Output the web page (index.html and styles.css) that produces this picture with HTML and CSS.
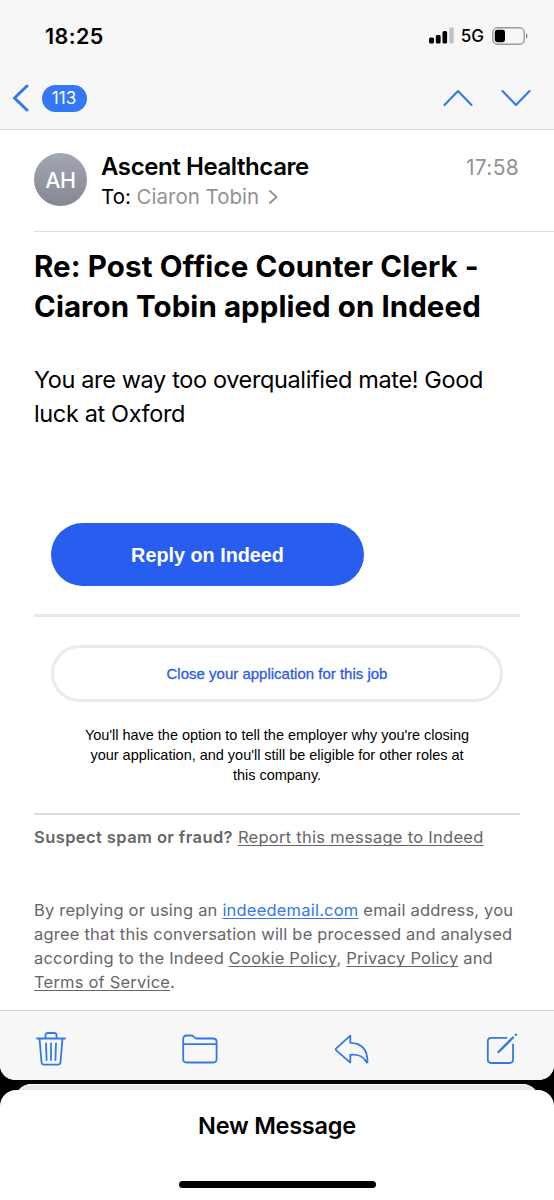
FILE: index.html
```html
<!DOCTYPE html>
<html lang="en">
<head>
<meta charset="utf-8">
<title>Mail</title>
<link rel="stylesheet" href="styles.css">
</head>
<body>
<div class="phone">
  <main class="screen">
    <header class="top">
      <div class="status">
        <span class="clock">18:25</span>
        <div class="status-right">
          <svg class="signal" width="25" height="17" viewBox="0 0 25 17">
            <rect x="0" y="10.5" width="5" height="6" rx="1.5"/>
            <rect x="6.8" y="8" width="4.8" height="8.5" rx="1.5"/>
            <rect x="13.5" y="4" width="4.6" height="12.5" rx="1.5"/>
            <rect x="20.2" y="0.3" width="4.6" height="16.2" rx="1.5" fill="#c4c4c4"/>
          </svg>
          <span class="net">5G</span>
          <svg class="battery" width="36" height="18" viewBox="0 0 36 18">
            <rect x="0.8" y="0.8" width="31.4" height="16.4" rx="4.6" fill="none" stroke="#999" stroke-width="1.4"/>
            <rect x="2.8" y="2.8" width="10.2" height="12.4" rx="2.4"/>
            <path d="M34 6.3c2 .8 2 4.6 0 5.4z" fill="#888"/>
          </svg>
        </div>
      </div>
      <nav class="nav">
        <svg class="line-icon" width="17" height="28" viewBox="0 0 17 28"><path d="M15 2 2.500 14 15 26" stroke-width="3"/></svg>
        <span class="badge">113</span>
        <svg class="line-icon up" width="30" height="18" viewBox="0 0 30 18"><path d="M1.500 16 15 2l13.500 14" stroke-width="2.1"/></svg>
        <svg class="line-icon down" width="30" height="18" viewBox="0 0 30 18"><path d="M1.500 2 15 16 28.500 2" stroke-width="2.1"/></svg>
      </nav>
    </header>

    <section class="sender">
      <div class="avatar">AH</div>
      <div class="who">
        <div class="from">Ascent Healthcare</div>
        <div class="to">To: <span class="recipient">Ciaron Tobin</span><svg class="chev" width="10" height="16" viewBox="0 0 10 16"><path d="M1.500 1.500 8.500 8l-7 6.500" fill="none" stroke="#929292" stroke-width="1.8"/></svg></div>
      </div>
      <time class="time">17:58</time>
    </section>

    <article class="mail">
      <h1 class="subject">Re: Post Office Counter Clerk -<br><span class="tighter">Ciaron Tobin applied on Indeed</span></h1>
      <p class="body">You are way too overqualified mate! Good<br>luck at Oxford</p>
      <a class="reply">Reply on Indeed</a>
      <div class="rule"></div>
      <a class="close">Close your application for this job</a>
      <p class="note">You'll have the option to tell the employer why you're closing<br>your application, and you'll still be eligible for other roles at<br>this company.</p>
      <div class="rule thin"></div>
      <p class="small spam"><b>Suspect spam or fraud?</b> <u>Report this message to Indeed</u></p>
      <p class="small legal">By replying or using an <u class="blue">indeedemail.com</u> email address, you<br>agree that this conversation will be processed and analysed<br>according to the Indeed <u>Cookie Policy</u>, <u>Privacy Policy</u> and<br><u>Terms of Service</u>.</p>
    </article>

    <footer class="toolbar">
      <svg class="line-icon" width="30" height="36" viewBox="0 0 30 36"><path d="M1 7.500h28M3.500 7.500 5.500 31q.2 2.700 2.800 2.700h13.400q2.600 0 2.800-2.700L26.500 7.500M9.500 7V4.300Q9.500 2 11.800 2h6.400q2.300 0 2.300 2.300V7M10 12.500l.6 16.500M15 12.500V29M20 12.500 19.400 29" stroke-width="1.8"/></svg>
      <svg class="line-icon" width="36" height="30" viewBox="0 0 36 30"><path d="M1.200 25V5q0-3.500 3.500-3.500h4.200q1.600 0 2.600.9l1.400 1.200q.8.900 2.400.9h15.800q3.500 0 3.500 3.500v17q0 3.500-3.500 3.500H4.700q-3.500 0-3.500-3.500zM1.200 10.200h33.400" stroke-width="1.8"/></svg>
      <svg class="line-icon" width="36" height="30" viewBox="0 0 36 30"><path d="M16.300 1.700 2 14.700q-.7.700 0 1.400l14.300 12.500v-7.800c8.500-.6 13 1.400 16.300 7.500.5.5.9.300.9-.5C33.500 14.500 27 9 16.300 8.800z" stroke-width="1.8"/></svg>
      <svg class="line-icon" width="32" height="32" viewBox="0 0 32 32"><path d="M20.500 4.800H5.200Q1.800 4.800 1.800 8.200v18.400q0 3.400 3.400 3.400h18.400q3.400 0 3.400-3.400V11.500" stroke-width="1.8"/><path d="m12.500 19 14.500-14.500M29.800 1.900l.2-.2" stroke-width="2.300"/></svg>
    </footer>
  </main>
  <div class="peek"></div>
  <section class="sheet">
    <div class="new">New Message</div>
    <div class="home"></div>
  </section>
</div>
</body>
</html>
```
FILE: styles.css
```css
* { box-sizing: border-box; }
body { margin: 0; background: #000; }
p, h1 { margin: 0; }
.phone { width: 554px; height: 1200px; display: flex; flex-direction: column; overflow: hidden; background: #000; font-family: Inter, "Liberation Sans", sans-serif; color: #000; white-space: nowrap; }
.screen { height: 1080px; flex: none; display: flex; flex-direction: column; background: #fff; border-radius: 0 0 15px 15px; overflow: hidden; }
svg { flex: none; display: block; }
.line-icon { fill: none; stroke: #3478e8; stroke-linecap: round; stroke-linejoin: round; }

.top { height: 130px; flex: none; background: #f7f7f7; border-bottom: 1px solid #d2d2d2; }
.status { height: 70px; padding: 1px 26px 0 45px; display: flex; align-items: center; justify-content: space-between; }
.clock { font-size: 21.500px; font-weight: 600; letter-spacing: 0.4px; }
.status-right { display: flex; align-items: center; }
.signal { margin-right: -1px; }
.net { font-size: 17px; font-weight: 500; margin: 0 8px 0 8px; }
.nav { height: 56px; padding: 0 23px 0 12px; display: flex; align-items: center; }
.badge { width: 45px; height: 27px; margin-left: 12.500px; border-radius: 14px; background: #3478f6; color: #fff; font-size: 17px; line-height: 27px; text-align: center; }
.up { margin-left: auto; }
.down { margin-left: 28px; }

.sender { height: 101px; flex: none; padding: 20px 35px 0 34px; display: flex; }
.avatar { width: 53px; height: 53px; margin-top: 3px; border-radius: 50%; background: linear-gradient(#a3a7b3, #858892); color: #fff; font-size: 21.500px; font-weight: 500; letter-spacing: -0.4px; line-height: 54px; text-align: center; }
.who { margin-left: 14px; }
.from { font-size: 24px; font-weight: 600; line-height: 34px; letter-spacing: -0.42px; }
.to { font-size: 20.500px; line-height: 25px; display: flex; align-items: center; white-space: pre; }
.recipient { color: #929292; }
.chev { margin-left: 9px; }
.time { margin-left: auto; font-size: 21px; line-height: 36px; letter-spacing: 0.3px; color: #929292; }

.mail { flex: 1; margin-left: 34px; padding: 14px 34px 0 0; border-top: 1px solid #dcdcdc; display: flex; flex-direction: column; align-items: flex-start; }
.subject { font-size: 29.500px; font-weight: 700; line-height: 40px; letter-spacing: 0.11px; }
.tighter { letter-spacing: 0.06px; }
.body { margin-top: 37px; font-size: 23.500px; line-height: 34px; letter-spacing: -0.37px; }
.reply { width: 313px; height: 63px; margin: 92px 0 28px 17px; border-radius: 32px; background: #285eef; color: #fff; font: bold 19.800px/65px "Liberation Sans", sans-serif; text-align: center; }
.rule { width: 486px; height: 3px; background: #e8e8e8; }
.close { width: 452px; height: 57px; margin: 28px 0 23px 17px; border: 3px solid #ebebeb; border-radius: 29px; color: #2d5de0; font: 15px/51px "Liberation Sans", sans-serif; -webkit-text-stroke: 0.3px; text-align: center; }
.note { width: 486px; font: 14.500px/20px "Liberation Sans", sans-serif; letter-spacing: -0.02px; text-align: center; }
.rule.thin { height: 2px; margin-top: 28px; background: #ddd; }
.small { font-size: 16.500px; line-height: 24px; color: #666; }
.small u { text-decoration-thickness: 1px; text-underline-offset: 2px; text-decoration-skip-ink: none; }
.small b { font-weight: 600; letter-spacing: 0.41px; }
.small .blue { color: #3478e8; }
.spam { margin-top: 10px; letter-spacing: 0.28px; }
.legal { margin-top: 49px; letter-spacing: 0.2px; }

.toolbar { height: 70px; flex: none; padding: 6px 36px 0; border-top: 1px solid #d2d2d2; background: #f7f7f7; display: flex; align-items: center; justify-content: space-between; }
.peek { height: 24px; flex: none; margin: 4px 15px -18px; border-radius: 16px 16px 0 0; background: #e8e8e8; border-top: 1px solid #fff; }
.sheet { flex: 1; background: #fff; border-radius: 16px 16px 0 0; display: flex; flex-direction: column; align-items: center; justify-content: space-between; padding: 20px 0 12px; z-index: 1; }
.new { font-size: 23.500px; font-weight: 600; line-height: 32px; letter-spacing: -0.25px; }
.home { width: 197px; height: 7px; border-radius: 4px; background: #000; }
```
